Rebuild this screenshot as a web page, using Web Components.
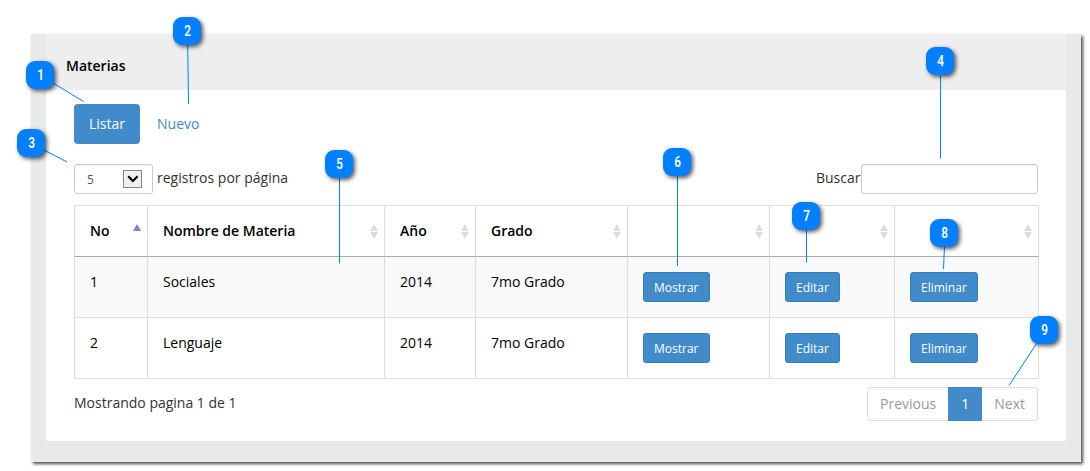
<!DOCTYPE html>
<html lang="es">
<head>
<meta charset="utf-8">
<title>Materias</title>
<style>
body{margin:0;background:#fff;font:14px/20px "Open Sans","Noto Sans",sans-serif;color:#333;overflow:hidden}
</style>
</head>
<body>
<materias-page></materias-page>
<script>
const define=(name,html,setup)=>customElements.define(name,class extends HTMLElement{
  constructor(){super();this.attachShadow({mode:'open'}).innerHTML=html;}
  connectedCallback(){if(setup)setup(this,this.shadowRoot);}
});

define('ui-panel',`<style>
:host{display:block;box-sizing:border-box;width:1020px;height:407px;background:#fff;border-radius:2px}
header{box-sizing:border-box;height:56px;padding:22px 20px 0;background:#eee;color:#000;font-weight:600;border-radius:2px 2px 0 0}
.body{padding:14px 28px 0}
</style><header><slot name="title"></slot></header><div class="body"><slot></slot></div>`);

define('nav-pill',`<style>
:host{display:block;padding:10px 15px;border-radius:4px;color:#428bca}
:host([active]){background:#428bca;color:#fff}
</style><slot></slot>`);

define('page-size',`<style>
:host{display:flex;align-items:flex-start;gap:4px}
.select{box-sizing:border-box;width:79px;height:30px;border:1px solid #ccc;border-radius:3px;padding:5px 10px 0 12px;display:flex;justify-content:space-between;font-size:12px;color:#555;box-shadow:inset 0 1px 1px rgba(0,0,0,.06)}
svg{display:block}
.label{padding-top:4px}
</style><div class="select"><span><slot name="value"></slot></span><svg width="19" height="18" viewBox="0 0 19 18"><rect x=".5" y=".5" width="18" height="17" fill="#f0f0f0" stroke="#858585"/><path d="M5.2 6.3 9.9 11l4.7-4.7" fill="none" stroke="#000" stroke-width="2.1"/></svg></div><span class="label"><slot></slot></span>`);

define('search-box',`<style>
:host{display:flex}
.label{padding:4px .5px 0 0}
.field{box-sizing:border-box;width:177px;height:30px;border:1px solid #ccc;border-radius:3px;box-shadow:inset 0 1px 1px rgba(0,0,0,.06)}
</style><span class="label"><slot></slot></span><div class="field"></div>`);

define('data-table',`<style>
:host{display:grid;grid-template-columns:73px 237px 91px 152px 142px 125px 145px;grid-template-rows:51px 61px 62px;width:965px}
</style><slot></slot>`);

define('head-cell',`<style>
:host{display:flex;justify-content:space-between;box-sizing:border-box;border:1px solid #ddd;border-width:1px 0 0 1px;padding:15px 6px 0 15px;color:#000;font-weight:600}
:host([last]){border-right-width:1px}
svg{display:block;width:8px;height:15px;margin-top:3px}
</style><span><slot></slot></span><svg viewBox="0 0 8 15"></svg>`,(el,root)=>{
  const asc=el.getAttribute('sort')==='asc';
  root.querySelector('svg').innerHTML=asc?'<path d="M0 7 4 0l4 7z" fill="#8080e4"/>':'<path d="M0 7 4 0l4 7zM0 8h8l-4 7z" fill="#dcdcdc"/>';
});

define('body-cell',`<style>
:host{display:block;box-sizing:border-box;border:1px solid #ddd;border-width:1px 0 0 1px;padding:15px 15px 0;color:#000}
:host([odd]){background:#f9f9f9;border-top-color:#aaa}
:host([last]){border-right-width:1px}
:host([bottom]){border-bottom-width:1px}
</style><slot></slot>`);

define('small-button',`<style>
:host{display:inline-block;vertical-align:top;box-sizing:border-box;height:30px;padding:5px 10px;border:1px solid #357ebd;border-radius:3px;background:#428bca;color:#fff;font-size:12px;line-height:19px}
:host([wide]){width:67px}
</style><slot></slot>`);

define('page-nav',`<style>
:host{display:flex;box-sizing:border-box;height:34px}
span{box-sizing:border-box;padding:6px 12px;border:1px solid #ddd;color:#999}
.prev{border-right:0;border-radius:4px 0 0 4px}
.now{width:34px;background:#428bca;border-color:#428bca;color:#fff}
.next{border-left:0;border-radius:0 4px 4px 0}
</style><span class="prev"><slot name="prev"></slot></span><span class="now"><slot></slot></span><span class="next"><slot name="next"></slot></span>`);

define('call-out',`<style>
:host{position:absolute;box-sizing:border-box;width:28px;height:28px;padding-left:1px;border-radius:9px;background:#0080ff;box-shadow:2px 2px 4px rgba(0,0,0,.65);color:#fff;font:600 14px/28px Roboto,sans-serif;text-align:center}
span{display:block;transform:scaleX(.84)}
</style><span><slot></slot></span>`,el=>{const[x,y]=el.getAttribute('at').split(',');el.style.left=x+'px';el.style.top=y+'px';});

define('materias-page',`<style>
:host{display:block;position:relative;box-sizing:border-box;width:1090px;height:471px;padding:34px 0 0 31px}
.frame{box-sizing:border-box;width:1050px;height:428px;padding:0 15px;background:#e8e9eb;box-shadow:2px 2px 3px rgba(0,0,0,.7)}
.row{display:flex;justify-content:space-between}
.pills{display:flex;gap:2px}
.tools{margin-top:20px}
data-table{margin-top:11px}
.foot{margin-top:8px}
.info{padding-top:6px}
.lines{position:absolute;left:0;top:0}
</style>
<div class="frame"><ui-panel><span slot="title">Materias</span>
<div class="pills"><nav-pill active>Listar</nav-pill><nav-pill>Nuevo</nav-pill></div>
<div class="row tools"><page-size><span slot="value">5</span>registros por página</page-size><search-box>Buscar</search-box></div>
<data-table>
<head-cell sort="asc">No</head-cell><head-cell>Nombre de Materia</head-cell><head-cell>Año</head-cell><head-cell>Grado</head-cell><head-cell></head-cell><head-cell></head-cell><head-cell last></head-cell>
<body-cell odd>1</body-cell><body-cell odd>Sociales</body-cell><body-cell odd>2014</body-cell><body-cell odd>7mo Grado</body-cell><body-cell odd><small-button wide>Mostrar</small-button></body-cell><body-cell odd><small-button>Editar</small-button></body-cell><body-cell odd last><small-button>Eliminar</small-button></body-cell>
<body-cell bottom>2</body-cell><body-cell bottom>Lenguaje</body-cell><body-cell bottom>2014</body-cell><body-cell bottom>7mo Grado</body-cell><body-cell bottom><small-button wide>Mostrar</small-button></body-cell><body-cell bottom><small-button>Editar</small-button></body-cell><body-cell bottom last><small-button>Eliminar</small-button></body-cell>
</data-table>
<div class="row foot"><span class="info">Mostrando pagina 1 de 1</span><page-nav><span slot="prev">Previous</span>1<span slot="next">Next</span></page-nav></div>
</ui-panel></div>
<svg class="lines" width="1090" height="471" fill="none" stroke="#0080ff"><path d="M53 83 83.500 101.500M187.700 44 188.500 104M44 150 67 162M940.500 74V158.500M339.500 177V263.500M677.500 175V266M806.500 229V262.500M944.500 246 943.500 269M1037 343 1009 385.500"/></svg>
<call-out at="26,61">1</call-out><call-out at="173,17">2</call-out><call-out at="17,129">3</call-out><call-out at="926,47">4</call-out><call-out at="325,150">5</call-out><call-out at="663,148">6</call-out><call-out at="792,202">7</call-out><call-out at="930,219">8</call-out><call-out at="1030,316">9</call-out>`);
</script>
</body>
</html>
